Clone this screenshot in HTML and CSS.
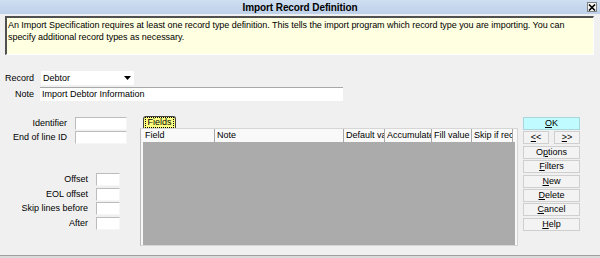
FILE: index.html
```html
<!DOCTYPE html>
<html>
<head>
<meta charset="utf-8">
<link rel="stylesheet" href="styles.css">
</head>
<body>
<div class="window">
  <div class="titlebar">
    <span></span>
    <span class="title">Import Record Definition</span>
    <span class="close"><svg width="8" height="7" viewBox="0 0 8 7"><path d="M1 0.5 L7 6.5 M7 0.5 L1 6.5" stroke="#000" stroke-width="1.6"/></svg></span>
  </div>
  <div class="info">An Import Specification requires at least one record type definition. This tells the import program which record type you are importing. You can<br>specify additional record types as necessary.</div>
  <div class="top-form">
    <span class="lbl">Record</span>
    <div class="combo"><span>Debtor</span><span class="arrow"><svg width="7" height="4" viewBox="0 0 7 4"><path d="M0 0 H7 L3.5 4 Z" fill="#000"/></svg></span></div>
    <span class="lbl">Note</span>
    <div class="note-input">Import Debtor Information</div>
  </div>
  <div class="lower">
    <div class="left">
      <div class="id-grid">
        <span class="lbl2">Identifier</span><span class="field"></span>
        <span class="lbl2">End of line ID</span><span class="field"></span>
      </div>
      <div class="off-grid">
        <span class="lbl2">Offset</span><span class="field"></span>
        <span class="lbl2">EOL offset</span><span class="field"></span>
        <span class="lbl2">Skip lines before</span><span class="field"></span>
        <span class="lbl2">After</span><span class="field"></span>
      </div>
    </div>
    <div class="tabs">
      <div class="tab"><span>Fields</span></div>
      <div class="frame">
        <div class="grid">
          <div class="header">
            <span class="hcell c1">Field</span>
            <span class="hcell c2">Note</span>
            <span class="hcell c3">Default value</span>
            <span class="hcell c4">Accumulate</span>
            <span class="hcell c5">Fill value</span>
            <span class="hcell c6">Skip if record</span>
          </div>
        </div>
      </div>
    </div>
    <div class="buttons">
      <div class="btn ok"><u>O</u>K</div>
      <div class="nav"><div class="btn"><u>&lt;</u>&lt;</div><div class="btn"><u>&gt;</u>&gt;</div></div>
      <div class="btn">O<u>p</u>tions</div>
      <div class="btn"><u>F</u>ilters</div>
      <div class="btn"><u>N</u>ew</div>
      <div class="btn"><u>D</u>elete</div>
      <div class="btn"><u>C</u>ancel</div>
      <div class="btn"><u>H</u>elp</div>
    </div>
  </div>
  <div class="bottom"></div>
</div>
</body>
</html>
```
FILE: styles.css
```css
* { box-sizing: border-box; }
body {
  margin: 0;
  background: #f0f0f0;
  font-family: "Liberation Sans", Arial, sans-serif;
  font-size: 9px;
  color: #000;
}
.window {
  width: 600px;
  height: 258px;
  overflow: hidden;
  display: flex;
  flex-direction: column;
}
.titlebar {
  height: 14px;
  flex: none;
  background: linear-gradient(#cfdef1, #bed1ea);
  display: grid;
  grid-template-columns: 1fr auto 1fr;
  align-items: center;
}
.title {
  font-weight: bold;
  font-size: 10px;
  letter-spacing: -0.1px;
}
.close {
  justify-self: end;
  margin-right: 3px;
  width: 10px;
  height: 10px;
  background: #f6f6f6;
  border: 1px solid #808080;
  display: flex;
  align-items: center;
  justify-content: center;
}
.info {
  flex: none;
  margin: 2px 6px 0 5px;
  height: 39px;
  background: #ffffe1;
  border-top: 2px solid #505050;
  border-left: 2px solid #505050;
  border-right: 1px solid #fff;
  border-bottom: 1px solid #fff;
  padding: 1px 0 0 1px;
  line-height: 12px;
  letter-spacing: -0.05px;
  white-space: nowrap;
  overflow: hidden;
}
.top-form {
  margin-top: 16px;
  display: grid;
  grid-template-columns: 34px max-content;
  column-gap: 6px;
  row-gap: 2px;
  align-items: center;
}
.lbl {
  text-align: right;
  line-height: 14px;
}
.combo {
  width: 93px;
  height: 14px;
  margin-left: 1px;
  background: #fff;
  display: flex;
  justify-content: space-between;
  align-items: center;
  padding-left: 2px;
}
.arrow {
  width: 13px;
  height: 14px;
  display: flex;
  align-items: center;
  justify-content: center;
}
.note-input {
  width: 303px;
  height: 14px;
  background: #fff;
  border-top: 1px solid #a8a8a8;
  padding-left: 2px;
  line-height: 13px;
}
.lower {
  margin-top: 15px;
  display: flex;
  align-items: flex-start;
}
.left {
  width: 140px;
  flex: none;
  padding-top: 1px;
}
.id-grid {
  display: grid;
  grid-template-columns: 67px 52px;
  column-gap: 8px;
  row-gap: 1px;
}
.off-grid {
  margin-top: 29px;
  display: grid;
  grid-template-columns: 88px 24px;
  column-gap: 8px;
  row-gap: 1.6px;
}
.lbl2 {
  text-align: right;
  line-height: 13px;
  white-space: nowrap;
}
.field {
  height: 13px;
  background: #fff;
  border-top: 1px solid #bcbcbc;
  border-left: 1px solid #bcbcbc;
  border-right: 1px solid #f6f6f6;
  border-bottom: 1px solid #f6f6f6;
}
.tabs {
  width: 378px;
  flex: none;
}
.tab {
  margin-left: 3px;
  width: 33px;
  height: 12px;
  background: #ffff80;
  border: 1px solid #404040;
  border-bottom: none;
  border-radius: 3px 3px 0 0;
  display: flex;
  align-items: center;
  justify-content: center;
}
.tab span {
  outline: 1px dotted #000;
  line-height: 9px;
  padding: 0 1px;
}
.frame {
  height: 118px;
  border: 1px solid #d6d6d6;
  border-left-color: #bdbdbd;
  padding: 0 2px;
  background: #f9f9f9;
  display: flex;
  flex-direction: column;
}
.grid {
  flex: 1;
  background: #ababab;
  display: flex;
  flex-direction: column;
}
.header {
  display: flex;
  height: 13px;
  background: #f9f9f9;
}
.hcell {
  flex: none;
  border-right: 1px solid #a8a8a8;
  padding-left: 2px;
  line-height: 13px;
  overflow: hidden;
  white-space: nowrap;
  text-overflow: clip;
}
.c1 { width: 72px; }
.c2 { width: 129px; }
.c3 { width: 41px; }
.c4 { width: 47px; }
.c5 { width: 40px; }
.c6 { width: 41px; }
.buttons {
  margin-left: 5px;
  width: 57px;
  flex: none;
  padding-top: 1px;
  display: flex;
  flex-direction: column;
  gap: 1.4px;
}
.btn {
  height: 13px;
  background: #f3f3f3;
  border: 1px solid #cfcfcf;
  text-align: center;
  line-height: 11px;
}
.btn.ok {
  background: #c0fcff;
  border-color: #a9d6dc;
}
.nav {
  display: flex;
  justify-content: space-between;
}
.nav .btn {
  width: 26px;
}
.bottom {
  margin-top: auto;
  height: 3px;
  flex: none;
  border-top: 1px solid #a0a0a0;
  background: #dadada;
}
```
